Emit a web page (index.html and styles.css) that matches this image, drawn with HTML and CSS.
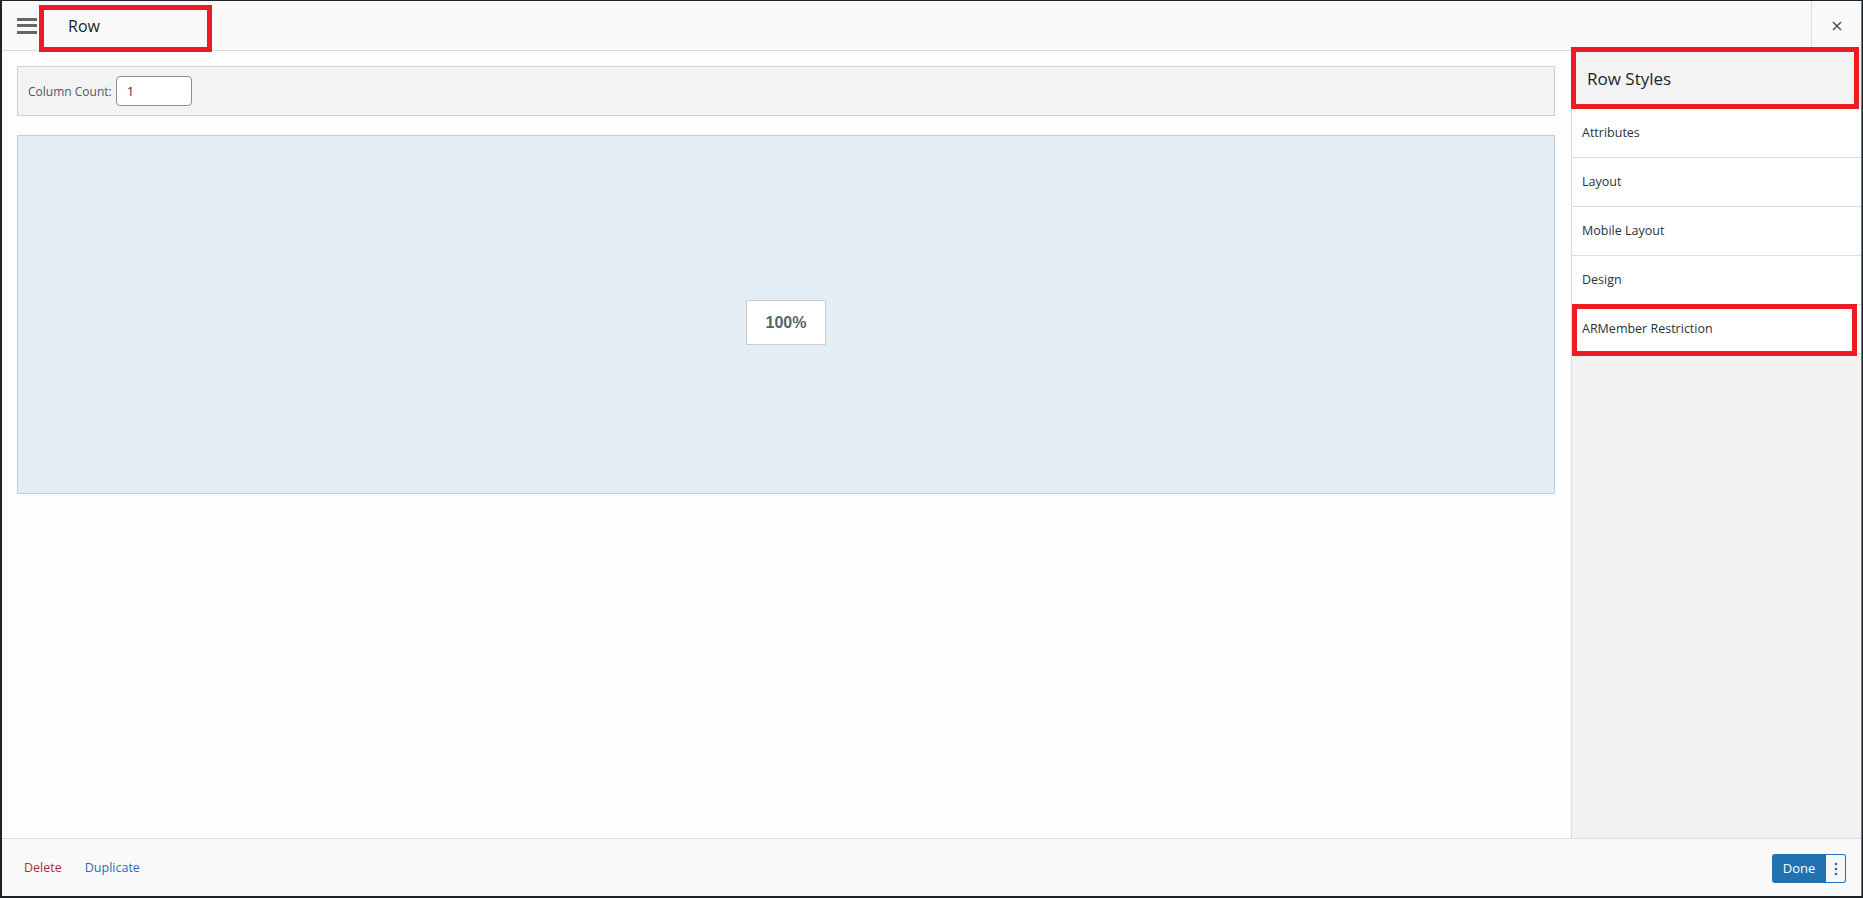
FILE: index.html
```html
<!DOCTYPE html>
<html>
  <head>
    <link rel="stylesheet" href="styles.css">
  </head>
  <body>
    <div class="modal">
      <div class="modal-header">
        <div class="menu-toggle">
          <svg width="20" height="16" viewBox="0 0 20 16">
            <rect x="0" y="0" width="20" height="3" fill="#666"></rect>
            <rect x="0" y="6" width="20" height="3" fill="#666"></rect>
            <rect x="0" y="13" width="20" height="3" fill="#666"></rect>
          </svg>
        </div>
        <div class="modal-title">Row</div>
        <div class="close-btn">
          <svg width="10" height="10" viewBox="0 0 10 10">
            <path d="M1 1 L9 9 M9 1 L1 9" stroke="#50575e" stroke-width="1.6" fill="none"></path>
          </svg>
        </div>
        <div class="mark mark-title"></div>
      </div>

      <div class="modal-body">
        <div class="content">
          <div class="column-bar">
            <label>Column Count:</label>
            <div class="count-input">1</div>
          </div>
          <div class="row-preview">
            <div class="col-size">100%</div>
          </div>
        </div>

        <div class="sidebar">
          <div class="sidebar-title">
            Row Styles
            <div class="mark mark-styles"></div>
          </div>
          <div class="style-item">Attributes</div>
          <div class="style-item">Layout</div>
          <div class="style-item">Mobile Layout</div>
          <div class="style-item">Design</div>
          <div class="style-item">
            ARMember Restriction
            <div class="mark mark-armember"></div>
          </div>
        </div>
      </div>

      <div class="modal-footer">
        <div class="footer-links">
          <span class="delete">Delete</span>
          <span class="duplicate">Duplicate</span>
        </div>
        <div class="done-group">
          <span class="done">Done</span>
          <span class="more">
            <svg width="4" height="14" viewBox="0 0 4 14">
              <circle cx="2" cy="2" r="1.3" fill="#2271b1"></circle>
              <circle cx="2" cy="7" r="1.3" fill="#2271b1"></circle>
              <circle cx="2" cy="12" r="1.3" fill="#2271b1"></circle>
            </svg>
          </span>
        </div>
      </div>
    </div>
  </body>
</html>
```

FILE: styles.css
```css
body {
  margin: 0;
  overflow: hidden;
  background: #1d2327;
  font-family: "Open Sans", "Noto Sans", sans-serif;
  color: #23282d;
}

.modal {
  margin: 1px 1px 2px 2px;
  height: calc(100vh - 3px);
  background: #fdfdfd;
  display: flex;
  flex-direction: column;
  border-right: 1px solid #777;
  box-sizing: border-box;
}

/* Header */
.modal-header {
  position: relative;
  height: 49px;
  flex-shrink: 0;
  display: flex;
  align-items: center;
  background: #f9f9f9;
  border-bottom: 1px solid #dcdcde;
}

.menu-toggle {
  width: 50px;
  height: 49px;
  display: flex;
  justify-content: center;
  align-items: center;
}

.modal-title {
  flex: 1;
  padding-left: 16px;
  font-size: 16px;
  color: #1d2327;
}

.close-btn {
  width: 49px;
  height: 49px;
  border-left: 1px solid #dcdcde;
  display: flex;
  justify-content: center;
  align-items: center;
}

/* Annotation boxes */
.mark {
  position: absolute;
  border: 5px solid #ed1c24;
  pointer-events: none;
}

.mark-title {
  left: 37px;
  top: 4px;
  width: 163px;
  height: 37px;
}

.mark-styles {
  left: -1px;
  top: -4px;
  width: 278px;
  height: 52px;
}

.mark-armember {
  left: 0;
  top: -1px;
  width: 275px;
  height: 42px;
}

/* Body */
.modal-body {
  flex: 1;
  display: flex;
  min-height: 0;
}

.content {
  flex: 1;
  padding: 15px 16px 15px 15px;
}

.column-bar {
  height: 48px;
  display: flex;
  align-items: center;
  gap: 4px;
  padding-left: 10px;
  background: #f3f3f3;
  border: 1px solid #cfcfcf;
  font-size: 12px;
  color: #50575e;
}

.count-input {
  width: 64px;
  height: 28px;
  line-height: 28px;
  padding-left: 10px;
  background: #fff;
  border: 1px solid #8c8f94;
  border-radius: 4px;
  font-size: 13px;
  color: #2c3338;
}

.row-preview {
  margin-top: 19px;
  height: 357px;
  background: #e2eef3;
  border: 1px solid #bfd0da;
  display: flex;
  justify-content: center;
  align-items: center;
}

.col-size {
  margin-top: 16px;
  width: 78px;
  height: 43px;
  line-height: 43px;
  text-align: center;
  background: #fff;
  border: 1px solid #ccc;
  font-family: "Liberation Sans", Arial, sans-serif;
  font-weight: bold;
  font-size: 16px;
  color: #56646f;
}

/* Sidebar */
.sidebar {
  width: 289px;
  flex-shrink: 0;
  background: #f2f2f2;
  border-left: 1px solid #dcdcde;
}

.sidebar-title {
  position: relative;
  height: 58px;
  line-height: 56px;
  padding-left: 15px;
  font-size: 17px;
  color: #1d2327;
  background: #f3f3f3;
}

.style-item {
  position: relative;
  height: 48px;
  line-height: 48px;
  padding-left: 10px;
  background: #fff;
  border-bottom: 1px solid #dcdcde;
  font-size: 12.5px;
  font-weight: 500;
  color: #2c3338;
}

/* Footer */
.modal-footer {
  height: 57px;
  flex-shrink: 0;
  display: flex;
  justify-content: space-between;
  align-items: center;
  padding: 0 15px 0 22px;
  background: #f9f9f9;
  border-top: 1px solid #dcdcde;
}

.footer-links {
  display: flex;
  gap: 23px;
  font-size: 12.5px;
}

.delete {
  color: #b32d2e;
}

.duplicate {
  color: #2271b1;
}

.done-group {
  display: flex;
  height: 29px;
  margin-top: 2px;
}

.done {
  width: 54px;
  line-height: 29px;
  text-align: center;
  font-size: 13px;
  color: #fff;
  background: #2271b1;
  border-radius: 3px 0 0 3px;
}

.more {
  width: 19px;
  display: flex;
  justify-content: center;
  align-items: center;
  background: #f6f7f7;
  border: 1px solid #2271b1;
  border-left: none;
  border-radius: 0 3px 3px 0;
}
```
